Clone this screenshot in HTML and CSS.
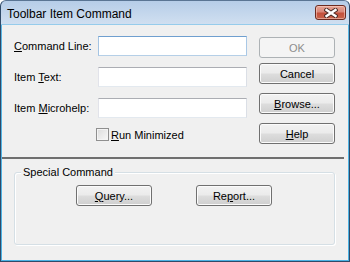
FILE: index.html
```html
<!DOCTYPE html>
<html lang="en">
<head>
    <meta charset="UTF-8">
    <meta name="viewport" content="width=device-width, initial-scale=1.0">
    <title>Toolbar Item Command</title>
    <link rel="stylesheet" href="styles.css">
</head>
<body>
    <div class="window">
        <div class="titlebar">
            <span class="title">Toolbar Item Command</span>
            <button class="close-btn" title="Close">
                <svg width="14" height="10" viewBox="0 0 14 10">
                    <path d="M2.5 2 L11.5 8 M11.5 2 L2.5 8" stroke="#4b2a24" stroke-width="4.4" stroke-linecap="square"/>
                    <path d="M2.5 2 L11.5 8 M11.5 2 L2.5 8" stroke="#ffffff" stroke-width="2.4" stroke-linecap="square"/>
                </svg>
            </button>
        </div>

        <div class="client">
            <div class="top">
                <div class="fields">
                    <div class="field">
                        <label for="cmdLine"><u>C</u>ommand Line:</label>
                        <input type="text" id="cmdLine" class="focused">
                    </div>
                    <div class="field">
                        <label for="itemText">Item <u>T</u>ext:</label>
                        <input type="text" id="itemText">
                    </div>
                    <div class="field">
                        <label for="itemHelp">Item <u>M</u>icrohelp:</label>
                        <input type="text" id="itemHelp">
                    </div>
                    <label class="check">
                        <input type="checkbox" id="runMin">
                        <span><u>R</u>un Minimized</span>
                    </label>
                </div>

                <div class="actions">
                    <button class="btn btn-ok" disabled>OK</button>
                    <button class="btn">Cancel</button>
                    <button class="btn"><u>B</u>rowse...</button>
                    <button class="btn"><u>H</u>elp</button>
                </div>
            </div>

            <div class="separator"></div>

            <div class="group">
                <span class="group-label">Special Command</span>
                <div class="group-buttons">
                    <button class="btn"><u>Q</u>uery...</button>
                    <button class="btn">Re<u>p</u>ort...</button>
                </div>
            </div>
        </div>
    </div>
</body>
</html>
```

FILE: styles.css
```css
/* Reset Styles */
* {
    margin: 0;
    padding: 0;
    box-sizing: border-box;
}

body {
    font-family: 'Liberation Sans', Arial, sans-serif;
    font-size: 11px;
    color: #000;
    background: #ffffff;
}

/* Window Frame */
.window {
    width: 350px;
    height: 262px;
    border: 1px solid #2f4a68;
    border-top-color: #5a7594;
    border-radius: 6px 6px 0 0;
    background: linear-gradient(to bottom, #b6cde8 0, #d0dff0 23px, #5bb8e6 24px, #4ab2e4 100%);
    padding: 0 1px 1px;
    display: flex;
    flex-direction: column;
}

/* Title Bar */
.titlebar {
    height: 24px;
    display: flex;
    justify-content: space-between;
    align-items: flex-start;
    padding: 0 2px 0 5px;
}

.title {
    font-size: 12px;
    line-height: 14px;
    padding-top: 6px;
}

.close-btn {
    width: 31px;
    height: 15px;
    margin-top: 4px;
    border: 1px solid #6e2b20;
    border-radius: 3px;
    background: linear-gradient(to bottom, #e6a394 0%, #d9887a 45%, #c4503b 55%, #c8644c 100%);
    box-shadow: inset 0 0 0 1px rgba(255, 220, 210, 0.5);
    display: flex;
    justify-content: center;
    align-items: center;
}

/* Client Area */
.client {
    flex: 1;
    background: #f0f0f0;
}

.top {
    display: flex;
    padding-left: 12px;
}

.fields {
    width: 233px;
    padding-top: 11px;
}

.field {
    display: flex;
    align-items: center;
    height: 20px;
    margin-bottom: 11px;
}

.field label {
    width: 84px;
}

.field input {
    width: 149px;
    height: 20px;
    border: 1px solid;
    border-color: #abadb3 #dbdfe6 #e3e9ef #e2e3ea;
    background: #fff;
    outline: none;
}

.field input.focused {
    border-color: #6f9fcf #a9c8e6 #b5cfe7 #a4c4e3;
}

/* Checkbox */
.check {
    display: flex;
    align-items: center;
    margin-top: -1px;
    padding-left: 82px;
    height: 13px;
}

.check input {
    appearance: none;
    width: 13px;
    height: 13px;
    border: 1px solid #8f8f8f;
    background: linear-gradient(to bottom right, #dcdcdc, #f8f8f8);
    box-shadow: inset 0 0 0 1px #f4f4f4;
}

.check span {
    margin-left: 2px;
}

/* Buttons */
.actions {
    display: flex;
    flex-direction: column;
    margin-left: 12px;
    padding-top: 12px;
}

.btn {
    font: inherit;
    color: #000;
    width: 76px;
    height: 21px;
    border: 1px solid #707070;
    border-radius: 3px;
    background: linear-gradient(to bottom, #f2f2f2 0%, #ebebeb 48%, #dddddd 52%, #cfcfcf 100%);
    box-shadow: inset 0 0 0 1px #fbfbfb;
}

.actions .btn {
    margin-bottom: 9px;
}

.actions .btn-ok {
    margin-bottom: 5px;
}

.btn:disabled {
    color: #8d8d8d;
    border-color: #adb2b5;
    background: #f4f4f4;
    box-shadow: none;
}

/* Separator */
.separator {
    height: 2px;
    margin: 4px 4px 0 0;
    background: #6f6f6f;
}

/* Special Command Group */
.group {
    position: relative;
    height: 73px;
    margin: 13px 13px 0 12px;
    padding: 12px 0 0 61px;
    border: 1px solid #d5dfe5;
    border-radius: 3px;
    box-shadow: 1px 1px 0 #fff, inset 1px 1px 0 #fff;
}

.group-label {
    position: absolute;
    top: -8px;
    left: 6px;
    padding: 0 2px;
    line-height: 14px;
    background: #f0f0f0;
}

.group-buttons {
    display: flex;
    gap: 44px;
}
```
